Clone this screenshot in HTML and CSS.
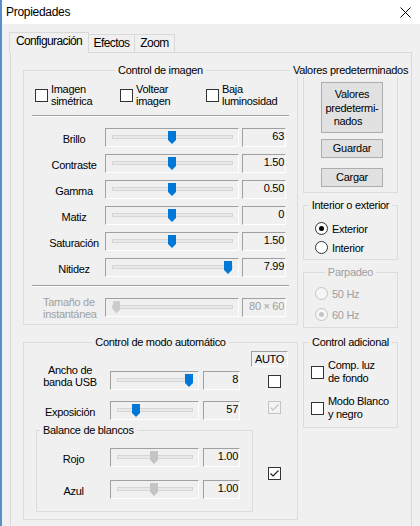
FILE: index.html
```html
<!DOCTYPE html>
<html lang="es">
    <head>
        <meta charset="utf-8">
        <title>Propiedades</title>
        <link rel="stylesheet" href="styles.css">
    </head>

    <body>
        <div id="window">
            <div id="title-bar">
                <span id="title">Propiedades</span>
                <svg class="close-icon" width="11" height="11" viewBox="0 0 11 11"><path d="M0.5 0.5l10 10M10.5 0.5l-10 10"/></svg>
            </div>

            <div id="tabs">
                <div class="tab selected">Configuración</div>
                <div class="tab" id="effects-tab">Efectos</div>
                <div class="tab" id="zoom-tab">Zoom</div>
            </div>

            <div id="page">
                <div class="group" id="image-group">
                    <div class="group-title">Control de imagen</div>

                    <div class="check-row">
                        <div class="check"><span class="box"></span><span class="text">Imagen<br>simétrica</span></div>
                        <div class="check"><span class="box"></span><span class="text">Voltear<br>imagen</span></div>
                        <div class="check"><span class="box"></span><span class="text">Baja<br>luminosidad</span></div>
                    </div>

                    <div class="separator"></div>

                    <div class="slider-row">
                        <span class="label">Brillo</span>
                        <div class="slider sunken"><div class="track"></div><div class="thumb" style="left: 62px"></div></div>
                        <div class="value sunken">63</div>
                    </div>
                    <div class="slider-row">
                        <span class="label">Contraste</span>
                        <div class="slider sunken"><div class="track"></div><div class="thumb" style="left: 62px"></div></div>
                        <div class="value sunken">1.50</div>
                    </div>
                    <div class="slider-row">
                        <span class="label">Gamma</span>
                        <div class="slider sunken"><div class="track"></div><div class="thumb" style="left: 62px"></div></div>
                        <div class="value sunken">0.50</div>
                    </div>
                    <div class="slider-row">
                        <span class="label">Matiz</span>
                        <div class="slider sunken"><div class="track"></div><div class="thumb" style="left: 62px"></div></div>
                        <div class="value sunken">0</div>
                    </div>
                    <div class="slider-row">
                        <span class="label">Saturación</span>
                        <div class="slider sunken"><div class="track"></div><div class="thumb" style="left: 62px"></div></div>
                        <div class="value sunken">1.50</div>
                    </div>
                    <div class="slider-row">
                        <span class="label">Nitidez</span>
                        <div class="slider sunken"><div class="track"></div><div class="thumb" style="left: 118px"></div></div>
                        <div class="value sunken">7.99</div>
                    </div>

                    <div class="separator"></div>

                    <div class="slider-row disabled" id="snapshot-row">
                        <span class="label">Tamaño de<br>instantánea</span>
                        <div class="slider sunken"><div class="track"></div><div class="thumb off" style="left: 7px"></div></div>
                        <div class="value sunken">80 × 60</div>
                    </div>
                </div>

                <div class="column">
                    <div class="group" id="defaults-group">
                        <div class="group-title">Valores predeterminados</div>
                        <div class="button" id="defaults-button">Valores<br>predetermi-<br>nados&nbsp;&nbsp;&nbsp;</div>
                        <div class="button" id="save-button">Guardar</div>
                        <div class="button" id="load-button">Cargar</div>
                    </div>

                    <div class="group" id="place-group">
                        <div class="group-title">Interior o exterior</div>
                        <div class="option"><span class="radio on"></span>Exterior</div>
                        <div class="option"><span class="radio"></span>Interior</div>
                    </div>

                    <div class="group disabled" id="flicker-group">
                        <div class="group-title">Parpadeo</div>
                        <div class="option"><span class="radio"></span>50 Hz</div>
                        <div class="option"><span class="radio on"></span>60 Hz</div>
                    </div>
                </div>

                <div class="group" id="auto-group">
                    <div class="group-title">Control de modo automático</div>
                    <div class="auto-label sunken">AUTO</div>

                    <div class="auto-row" id="usb-row">
                        <span class="label">Ancho de<br>banda USB</span>
                        <div class="slider sunken"><div class="track"></div><div class="thumb" style="left: 74px"></div></div>
                        <div class="value sunken">8</div>
                        <span class="box"></span>
                    </div>
                    <div class="auto-row" id="exposure-row">
                        <span class="label">Exposición</span>
                        <div class="slider sunken"><div class="track"></div><div class="thumb" style="left: 21px"></div></div>
                        <div class="value sunken">57</div>
                        <span class="box off"><svg width="11" height="11" viewBox="0 0 11 11"><path d="M1.5 5.5l2.5 2.5l5.5-5.5"/></svg></span>
                    </div>

                    <div class="balance-line">
                        <div class="group" id="balance-group">
                            <div class="group-title">Balance de blancos</div>
                            <div class="balance-row">
                                <span class="label">Rojo</span>
                                <div class="slider sunken"><div class="track"></div><div class="thumb grey" style="left: 39px"></div></div>
                                <div class="value sunken">1.00</div>
                            </div>
                            <div class="balance-row">
                                <span class="label">Azul</span>
                                <div class="slider sunken"><div class="track"></div><div class="thumb grey" style="left: 39px"></div></div>
                                <div class="value sunken">1.00</div>
                            </div>
                        </div>
                        <span class="box"><svg width="11" height="11" viewBox="0 0 11 11"><path d="M1.5 5.5l2.5 2.5l5.5-5.5"/></svg></span>
                    </div>
                </div>

                <div class="group" id="extra-group">
                    <div class="group-title">Control adicional</div>
                    <div class="check"><span class="box"></span><span class="text">Comp. luz<br>de fondo</span></div>
                    <div class="check"><span class="box"></span><span class="text">Modo Blanco<br>y negro</span></div>
                </div>
            </div>
        </div>
    </body>
</html>
```

FILE: styles.css
```css
html, body {
    margin: 0;
    height: 100%;
}

body {
    background: #f0f0f0;
    color: #000;
    font-family: "Liberation Sans", Arial, sans-serif;
    font-size: 11px;
    letter-spacing: -0.3px;
    overflow: hidden;
}

#window {
    height: 100%;
    border-left: 2px solid #5b8fcb;
}

/* title bar */

#title-bar {
    display: flex;
    align-items: center;
    justify-content: space-between;
    height: 24px;
    padding: 0 9px 0 4px;
    background: #fff;
    font-size: 12px;
}

.close-icon {
    stroke: #000;
    stroke-width: 1;
    fill: none;
}

/* tabs */

#tabs {
    display: flex;
    align-items: flex-end;
    height: 28px;
    padding-left: 7px;
    font-size: 12px;
    letter-spacing: -0.6px;
}

.tab {
    box-sizing: border-box;
    height: 18px;
    margin-left: -1px;
    border: 1px solid #d9d9d9;
    border-bottom: none;
    line-height: 17px;
    text-align: center;
}

.tab.selected {
    position: relative;
    z-index: 1;
    width: 80px;
    height: 21px;
    margin: 0 0 -1px 0;
    padding-bottom: 3px;
    background: #f0f0f0;
}

#effects-tab {
    width: 47px;
}

#zoom-tab {
    width: 41px;
}

#page {
    display: grid;
    grid-template-columns: 275px 95px;
    column-gap: 5px;
    row-gap: 14px;
    align-items: start;
    width: 375px;
    margin-left: 8px;
    padding: 17px 13px 10px 12px;
    border: 1px solid #d9d9d9;
}

.column {
    display: flex;
    flex-direction: column;
    gap: 12px;
}

/* group boxes */

.group {
    display: flex;
    flex-direction: column;
    border: 1px solid #dcdcdc;
}

.group-title {
    align-self: center;
    margin-top: -7px;
    padding: 0 3px;
    line-height: 13px;
    white-space: nowrap;
    background: #f0f0f0;
}

.disabled {
    color: #a0a0a0;
}

.separator {
    margin: 8px 8px 0;
    border-top: 1px solid #a0a0a0;
    border-bottom: 1px solid #fff;
}

.sunken {
    box-sizing: border-box;
    border: 1px solid;
    border-color: #a0a0a0 #fff #fff #a0a0a0;
}

/* checkboxes and radios */

.check {
    display: flex;
    align-items: center;
}

.check .text {
    line-height: 12px;
}

.box {
    box-sizing: border-box;
    display: flex;
    flex: none;
    align-items: center;
    justify-content: center;
    width: 13px;
    height: 13px;
    border: 1px solid #333;
    background: #fff;
}

.box svg {
    fill: none;
    stroke: #222;
    stroke-width: 1.2;
}

.box.off {
    border-color: #c4c4c4;
    background: #f4f4f4;
}

.box.off svg {
    stroke: #c4c4c4;
}

.check .box {
    margin-right: 3px;
}

.check-row {
    display: flex;
    margin: 6px 0 0 11px;
}

.check-row .check {
    width: 85px;
}

.check-row .check + .check {
    width: 86px;
}

.option {
    display: flex;
    align-items: center;
    height: 15px;
    padding-left: 11px;
}

.radio {
    box-sizing: border-box;
    display: flex;
    align-items: center;
    justify-content: center;
    width: 13px;
    height: 13px;
    margin-right: 4px;
    border: 1px solid #333;
    border-radius: 50%;
    background: #fff;
}

.radio.on::after {
    content: "";
    width: 5px;
    height: 5px;
    border-radius: 50%;
    background: #000;
}

.disabled .radio {
    border-color: #c4c4c4;
    background: #f6f6f6;
}

.disabled .radio.on::after {
    background: #c4c4c4;
}

/* sliders */

.slider {
    position: relative;
    height: 19px;
}

.track {
    height: 2px;
    margin: 6px 5px 0 6px;
    border: 1px solid #d6d6d6;
    background: #e7eaea;
}

.thumb {
    position: absolute;
    top: 2px;
    width: 8px;
    height: 13px;
    background: #0078d7;
    clip-path: polygon(0 0, 100% 0, 100% 69%, 50% 100%, 0 69%);
}

.thumb.grey {
    background: #c4c4c4;
}

.thumb.off {
    width: 7px;
    background: #cccccc;
}

.value {
    height: 19px;
    padding-right: 1px;
    line-height: 14px;
    text-align: right;
}

.slider-row {
    display: flex;
    align-items: center;
    height: 19px;
    margin-top: 7px;
    padding-left: 21px;
}

.separator + .slider-row {
    margin-top: 11px;
}

.slider-row .label {
    width: 58px;
    padding-top: 2px;
    text-align: center;
}

.slider-row .slider {
    width: 134px;
    margin-left: 2px;
}

.slider-row .value {
    width: 44px;
    margin-left: 3px;
}

#image-group {
    padding-bottom: 5px;
}

#image-group #snapshot-row {
    height: 24px;
    margin-top: 8px;
}

#snapshot-row .label {
    width: 60px;
    margin-left: -2px;
    padding-top: 1px;
    line-height: 12px;
    text-align: left;
}

/* right column */

.button {
    box-sizing: border-box;
    align-self: flex-start;
    width: 62px;
    height: 19px;
    margin-left: 17px;
    border: 1px solid #adadad;
    background: #e1e1e1;
    line-height: 17px;
    text-align: center;
}

#defaults-group {
    padding-bottom: 5px;
}

#defaults-button {
    height: 51px;
    margin-top: 5px;
    padding-top: 5px;
    line-height: 13.5px;
}

#save-button {
    margin-top: 6px;
}

#load-button {
    margin-top: 10px;
}

#place-group {
    padding-bottom: 4px;
}

#place-group .group-title + .option {
    margin-top: 9px;
}

#place-group .option + .option {
    margin-top: 4px;
}

#flicker-group {
    padding-bottom: 5px;
}

#flicker-group .group-title + .option {
    margin-top: 7px;
}

#flicker-group .option + .option {
    margin-top: 6px;
}

#extra-group {
    padding-bottom: 6px;
}

#extra-group .check {
    margin-top: 10px;
    padding-left: 7px;
}

#extra-group .box {
    margin-right: 4px;
}

#extra-group .text {
    line-height: 13px;
}

/* automatic mode */

#auto-group {
    padding-bottom: 7px;
}

.auto-label {
    align-self: flex-end;
    width: 37px;
    height: 16px;
    margin: 2px 9px 0 0;
    line-height: 14px;
    text-align: center;
}

.auto-row {
    display: flex;
    align-items: center;
    padding-left: 19px;
}

.auto-row .label {
    width: 54px;
    text-align: center;
}

.auto-row .slider {
    width: 89px;
    margin-left: 13px;
}

.auto-row .value {
    width: 37px;
    margin-left: 4px;
}

.auto-row .box {
    margin-left: 28px;
}

#usb-row {
    align-items: flex-end;
    margin-top: -3px;
}

#usb-row .label {
    margin-bottom: 2px;
    line-height: 12px;
}

#usb-row .box {
    margin-bottom: 2px;
}

#exposure-row {
    margin-top: 11px;
}

#exposure-row .label {
    padding-top: 2px;
}

#exposure-row .box {
    align-self: flex-start;
}

.balance-line {
    display: flex;
    align-items: center;
    margin-top: 10px;
}

#balance-group {
    width: 215px;
    margin-left: 12px;
    padding-bottom: 12px;
}

#balance-group .group-title {
    align-self: flex-start;
    margin-left: 3px;
}

.balance-line > .box {
    margin: 4px 0 0 15px;
}

.balance-row {
    display: flex;
    align-items: center;
    margin-top: 11px;
}

.balance-row + .balance-row {
    margin-top: 13px;
}

.balance-row .label {
    width: 73px;
    padding-top: 3px;
    text-align: center;
}

.balance-row .slider {
    width: 89px;
}

.balance-row .value {
    width: 37px;
    margin-left: 4px;
}
```
